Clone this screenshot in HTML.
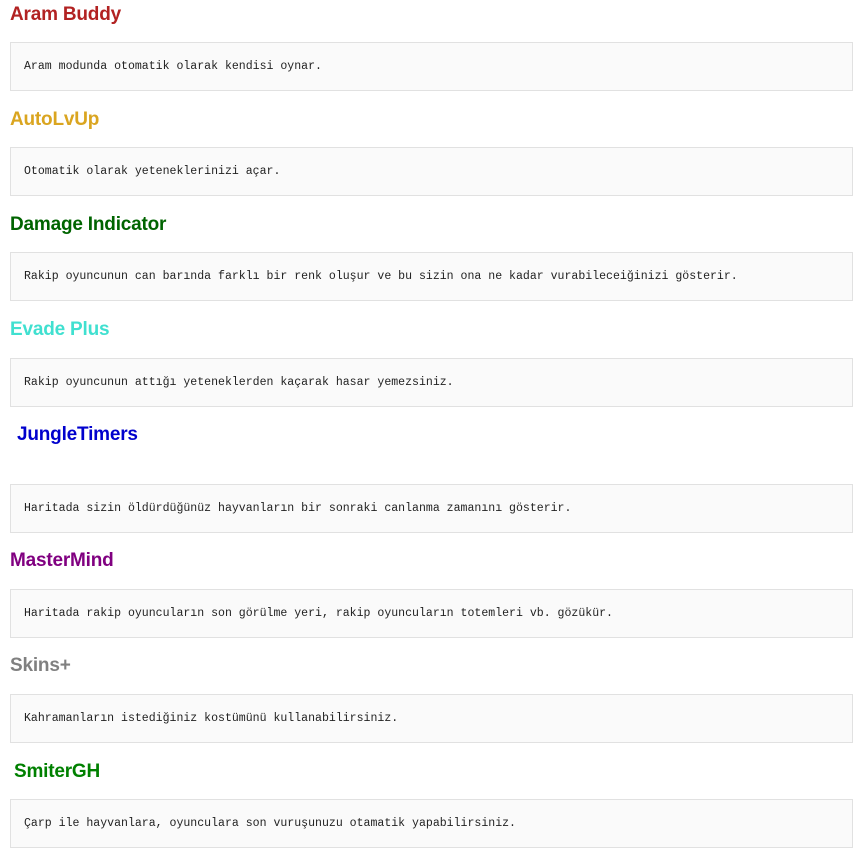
<!DOCTYPE html>
<html><head><meta charset="utf-8"><style>
body{margin:0;background:#fff;width:867px;height:863px;position:relative;overflow:hidden}
h{position:absolute;font:bold 19px "Liberation Sans",Arial,sans-serif;line-height:24px;letter-spacing:-0.2px}
.b{position:absolute;left:10px;width:841px;height:47px;border:1px solid #e1e1e1;background:#fafafa;font:11.55px "Liberation Mono",monospace;color:#222;line-height:47px;box-sizing:content-box}
.b span{margin-left:13px}
</style></head><body>
<h style="left:10px;top:3px;color:#b22222">Aram Buddy</h>
<div class="b" style="top:42px"><span>Aram modunda otomatik olarak kendisi oynar.</span></div>
<h style="left:10px;top:108px;color:#daa520">AutoLvUp</h>
<div class="b" style="top:147px"><span>Otomatik olarak yeteneklerinizi açar.</span></div>
<h style="left:10px;top:213px;color:#006400">Damage Indicator</h>
<div class="b" style="top:252px"><span>Rakip oyuncunun can barında farklı bir renk oluşur ve bu sizin ona ne kadar vurabileceiğinizi gösterir.</span></div>
<h style="left:10px;top:318px;color:#40e0d0">Evade Plus</h>
<div class="b" style="top:358px"><span>Rakip oyuncunun attığı yeteneklerden kaçarak hasar yemezsiniz.</span></div>
<h style="left:17px;top:423px;color:#0000cd">JungleTimers</h>
<div class="b" style="top:484px"><span>Haritada sizin öldürdüğünüz hayvanların bir sonraki canlanma zamanını gösterir.</span></div>
<h style="left:10px;top:549px;color:#800080">MasterMind</h>
<div class="b" style="top:589px"><span>Haritada rakip oyuncuların son görülme yeri, rakip oyuncuların totemleri vb. gözükür.</span></div>
<h style="left:10px;top:654px;color:#808080">Skins+</h>
<div class="b" style="top:694px"><span>Kahramanların istediğiniz kostümünü kullanabilirsiniz.</span></div>
<h style="left:14px;top:760px;color:#008000">SmiterGH</h>
<div class="b" style="top:799px"><span>Çarp ile hayvanlara, oyunculara son vuruşunuzu otamatik yapabilirsiniz.</span></div>
</body></html>
